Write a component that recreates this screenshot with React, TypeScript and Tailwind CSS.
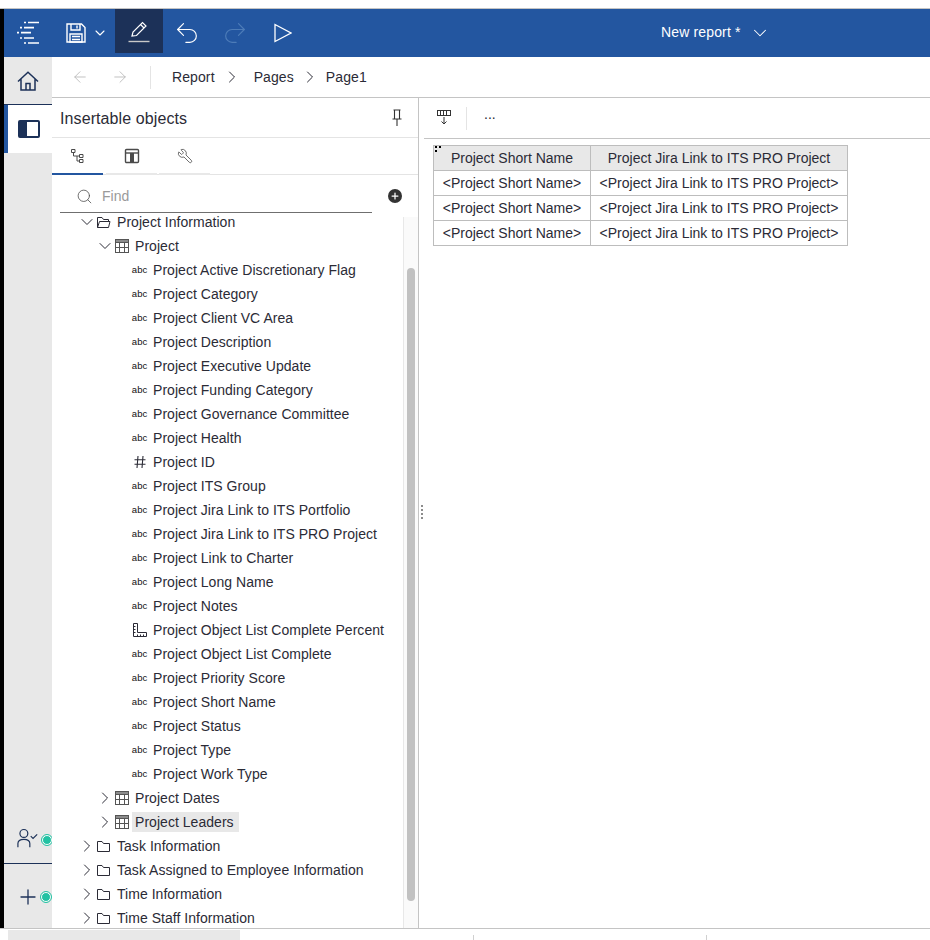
import React from 'react';
import { ChevronDown, ChevronRight, Undo2, Redo2, ArrowLeft, ArrowRight, Search, Plus, Wrench } from 'lucide-react';

type Row = { label: string; kind: 'abc' | 'num' | 'measure' };

const fields: Row[] = [
  { label: 'Project Active Discretionary Flag', kind: 'abc' },
  { label: 'Project Category', kind: 'abc' },
  { label: 'Project Client VC Area', kind: 'abc' },
  { label: 'Project Description', kind: 'abc' },
  { label: 'Project Executive Update', kind: 'abc' },
  { label: 'Project Funding Category', kind: 'abc' },
  { label: 'Project Governance Committee', kind: 'abc' },
  { label: 'Project Health', kind: 'abc' },
  { label: 'Project ID', kind: 'num' },
  { label: 'Project ITS Group', kind: 'abc' },
  { label: 'Project Jira Link to ITS Portfolio', kind: 'abc' },
  { label: 'Project Jira Link to ITS PRO Project', kind: 'abc' },
  { label: 'Project Link to Charter', kind: 'abc' },
  { label: 'Project Long Name', kind: 'abc' },
  { label: 'Project Notes', kind: 'abc' },
  { label: 'Project Object List Complete Percent', kind: 'measure' },
  { label: 'Project Object List Complete', kind: 'abc' },
  { label: 'Project Priority Score', kind: 'abc' },
  { label: 'Project Short Name', kind: 'abc' },
  { label: 'Project Status', kind: 'abc' },
  { label: 'Project Type', kind: 'abc' },
  { label: 'Project Work Type', kind: 'abc' },
];

function TableIcon() {
  return (
    <svg width="14" height="14" viewBox="0 0 14 14" fill="none" stroke="#555" strokeWidth="1">
      <rect x="0.5" y="0.5" width="13" height="13" />
      <rect x="0.5" y="0.5" width="13" height="3" fill="#8c8c8c" />
      <path d="M0.5 8.5H13.5M4.5 3.5V13.5M9.5 3.5V13.5" />
    </svg>
  );
}

function FolderIcon({ open }: { open?: boolean }) {
  if (open) {
    return (
      <svg width="15" height="13" viewBox="0 0 15 13" fill="none" stroke="#2b2b36" strokeWidth="1">
        <path d="M1.5 11.5V1.5H6L7.5 3.5H12.5V5.5" />
        <path d="M1.5 11.5L3.5 5.5H14L12.5 11.5Z" />
      </svg>
    );
  }
  return (
    <svg width="15" height="13" viewBox="0 0 15 13" fill="none" stroke="#2b2b36" strokeWidth="1">
      <path d="M1.5 11.5V1.5H6L7.5 3.5H13.5V11.5Z" />
    </svg>
  );
}

function FieldIcon({ kind }: { kind: Row['kind'] }) {
  if (kind === 'num') {
    return (
      <svg width="14" height="14" viewBox="0 0 14 14" fill="none" stroke="#2b2b36" strokeWidth="1.1">
        <path d="M5 1L4 13M10 1L9 13M1.5 4.8H12.5M1.5 9.2H12.5" />
      </svg>
    );
  }
  if (kind === 'measure') {
    return (
      <svg width="14" height="14" viewBox="0 0 14 14" fill="none" stroke="#2b2b36" strokeWidth="1">
        <path d="M0.5 0.5H4.5V9.5H13.5V13.5H0.5Z" />
        <path d="M0.5 3.5H2.5M0.5 6.5H2.5M0.5 9.5H2.5M4.5 13.5V11.5M7.5 13.5V11.5M10.5 13.5V11.5" />
      </svg>
    );
  }
  return <span className="text-[9.5px] leading-none text-[#111] tracking-normal">abc</span>;
}

function TreeRow({ indent, open, icon, label, active }: { indent: string; open?: boolean; icon: React.ReactNode; label: string; active?: boolean }) {
  return (
    <div className={`flex items-center h-6 shrink-0 ${indent}`}>
      {open ? (
        <ChevronDown size={20} strokeWidth={1.2} className="text-[#2b2b36] shrink-0 -mx-[2.5px]" />
      ) : (
        <ChevronRight size={20} strokeWidth={1.2} className="text-[#2b2b36] shrink-0 -mx-[2.5px]" />
      )}
      <span className="ml-[2px] w-[15px] flex justify-center shrink-0">{icon}</span>
      <span className={`ml-[3px] pl-[3px] pr-[5px] leading-5 whitespace-nowrap ${active ? 'bg-[#e8e8e8]' : ''}`}>{label}</span>
    </div>
  );
}

function Cell({ children, head }: { children: React.ReactNode; head?: boolean }) {
  return (
    <td className={`border border-[#bdbdbd] h-[25px] p-0 text-center whitespace-nowrap ${head ? 'bg-[#e8e8e8]' : ''}`}>{children}</td>
  );
}

export default function App() {
  return (
    <div className="w-[930px] h-[940px] overflow-hidden bg-white flex flex-col text-[14px] text-[#2b2b36] font-['Liberation_Sans',Arial,sans-serif]">
      <div className="h-[9px] shrink-0 bg-white border-b border-[#c4c4c4]" />
      <div className="flex-1 flex min-h-0">
        <div className="w-1 shrink-0 bg-black" />
        <div className="flex-1 flex flex-col min-w-0">
          {/* top bar */}
          <div className="h-12 shrink-0 bg-[#2356a0] flex items-start text-white">
            <div className="w-12 h-12 flex items-center justify-center">
              <svg width="24" height="24" viewBox="0 0 24 24" stroke="#fff" strokeWidth="1.7" fill="none">
                <path d="M8 1.5H10M12 1.5H23M4 6.7H6M8 6.7H18M1 11.7H3M5 11.7H15M4 17H6M8 17H18M8 22H10M12 22H23" />
              </svg>
            </div>
            <div className="w-[63px] h-12 flex items-center pl-[14px]">
              <svg width="20" height="20" viewBox="0 0 20 20" fill="none" stroke="#fff" strokeWidth="1.4">
                <path d="M1 1H15.5L19 4.5V19H1Z" />
                <path d="M5 1V7H14V1M11 2.5V5.5M4 11H16V19H4ZM6 13.5H14M6 16.5H14" />
              </svg>
              <ChevronDown size={16} strokeWidth={1.6} className="ml-[6px]" />
            </div>
            <div className="w-12 h-11 bg-[#1c3158] flex items-center justify-center">
              <svg className="mt-[2px]" width="22" height="22" viewBox="0 0 22 22" fill="none" stroke="#fff" strokeWidth="1.2">
                <path d="M4 15L5 11L14.5 1.5L18 5L8.5 14.5Z" />
                <path d="M12.5 3.5L16 7" />
                <path d="M0.5 20.5H21.5" stroke="#c9c9c9" strokeWidth="1.4" />
              </svg>
            </div>
            <div className="w-12 h-12 flex items-center justify-center">
              <Undo2 size={28} strokeWidth={1} />
            </div>
            <div className="w-12 h-12 flex items-center justify-center text-[#4d7cb8]">
              <Redo2 size={28} strokeWidth={1} />
            </div>
            <div className="w-12 h-12 flex items-center justify-center">
              <svg width="18" height="20" viewBox="0 0 18 20" fill="none" stroke="#fff" strokeWidth="1.3">
                <path d="M1 1.5V18.5L17 10Z" />
              </svg>
            </div>
            <div className="flex-1 flex items-center h-12 pl-[354px]">
              <span className="text-[14px] whitespace-nowrap tracking-[0.15px] -mt-[2px]">New report *</span>
              <ChevronDown size={22} strokeWidth={1.1} className="ml-[8px]" />
            </div>
          </div>

          <div className="flex-1 flex min-h-0">
            {/* rail */}
            <div className="w-12 shrink-0 bg-[#e8e8e8] flex flex-col text-[#1c3158]">
              <div className="h-[47px] flex items-center justify-center">
                <svg width="22" height="20" viewBox="0 0 22 20" fill="none" stroke="#1c3158" strokeWidth="1.5">
                  <path d="M1 10.5L11 1.2L21 10.5M4 8V19H18V8M9 19V12.5H13V19" />
                </svg>
              </div>
              <div className="h-px bg-[#1c3158]" />
              <div className="h-12 bg-white border-l-4 border-[#2356a0] flex items-center justify-center -mr-px pr-[3px]">
                <span className="w-[22px] h-[18px] rounded-[2px] border-2 border-[#1c3158] flex">
                  <span className="w-[7px] bg-[#1c3158]" />
                </span>
              </div>
              <div className="flex-1" />
              <div className="h-[46px] flex items-center pl-[13px] pb-[4px]">
                <svg width="24" height="22" viewBox="0 0 24 22" fill="none" stroke="#1c3158" strokeWidth="1.3">
                  <circle cx="7.5" cy="6" r="4.3" />
                  <path d="M1 21V17Q1 12.5 7.5 12.5Q14 12.5 14 17V21" />
                  <path d="M15 9L17.5 11.5L22 7" />
                </svg>
                <span className="w-[10px] h-[10px] shrink-0 rounded-full bg-[#22c2a3] border border-white outline outline-[#22c2a3] ml-[3px] mt-[3px]" />
              </div>
              <div className="h-px bg-[#1c3158]" />
              <div className="h-[76px] flex items-start pt-[21px] pl-3">
                <Plus size={24} strokeWidth={1.3} />
                <span className="w-[10px] h-[10px] shrink-0 rounded-full bg-[#22c2a3] border border-white outline outline-[#22c2a3] ml-[1px] mt-[7px]" />
              </div>
            </div>

            {/* main */}
            <div className="flex-1 flex flex-col min-w-0 relative bg-white">
              <div className="h-[41px] shrink-0 border-b border-[#c4c4c4] flex items-center">
                <ArrowLeft size={18} strokeWidth={1.1} className="ml-[19px] text-[#b5b5b5]" />
                <ArrowRight size={18} strokeWidth={1.1} className="ml-[22px] text-[#b5b5b5]" />
                <div className="w-px h-[23px] bg-[#e4e4e4] ml-[21px]" />
                <span className="ml-[21px] tracking-[0.1px]">Report</span>
                <ChevronRight size={20} strokeWidth={1.2} className="ml-[7px]" />
                <span className="ml-[12px] tracking-[0.1px]">Pages</span>
                <ChevronRight size={20} strokeWidth={1.2} className="ml-[6px]" />
                <span className="ml-[6px] tracking-[0.1px]">Page1</span>
              </div>

              <div className="flex-1 flex min-h-0">
                {/* insertable objects */}
                <div className="w-[367px] shrink-0 flex flex-col border-r border-[#c4c4c4]">
                  <div className="h-10 shrink-0 border-b border-[#e4e4e4] flex items-center justify-between pl-2 pr-[15px]">
                    <span className="text-[16px] tracking-[0.1px] pt-[2px]">Insertable objects</span>
                    <svg width="12" height="17" viewBox="0 0 12 17" fill="none" stroke="#333" strokeWidth="1.1">
                      <path d="M2.5 1H9.5M3.5 1V10M8.5 1V10M1.5 10H10.5M6 10V17" />
                    </svg>
                  </div>
                  <div className="h-[37px] shrink-0 border-b border-[#e4e4e4] flex items-stretch">
                    <div className="w-[51px] flex items-center justify-center border-b-2 border-[#2356a0] -mb-px">
                      <svg width="16" height="16" viewBox="0 0 16 16" fill="none" stroke="#4a4a4a" strokeWidth="1">
                        <path d="M1.5 1.5H5V4.5H1.5ZM9.5 6.5H13V9.5H9.5ZM9.5 11.5H13V14.5H9.5ZM3.5 4.5V8H9.5M7 8V13H9.5" />
                      </svg>
                    </div>
                    <div className="w-[51px] ml-[3px] flex items-center justify-center border-b-2 border-[#e8e8e8] -mb-px">
                      <svg width="16" height="16" viewBox="0 0 16 16" fill="none" stroke="#4a4a4a" strokeWidth="1.4">
                        <rect x="1.5" y="1.5" width="13" height="13" rx="1" />
                        <path d="M1.5 5H14.5" />
                        <rect x="6" y="5" width="4" height="9" fill="#4a4a4a" stroke="none" />
                      </svg>
                    </div>
                    <div className="w-[51px] ml-[2px] flex items-center justify-center border-b-2 border-[#e8e8e8] -mb-px">
                      <Wrench size={16} strokeWidth={1.2} className="text-[#4a4a4a] -scale-x-100" />
                    </div>
                  </div>
                  <div className="h-[38px] shrink-0 flex items-center justify-between pl-2 pr-4">
                    <div className="w-[312px] h-[38px] border-b border-[#6f6f6f] flex items-center pl-[16px] pt-[5px]">
                      <Search size={17} strokeWidth={1.1} className="text-[#4a4a4a]" />
                      <span className="ml-[9px] text-[#9a9a9a]">Find</span>
                    </div>
                    <span className="w-[14px] h-[14px] mt-[4px] rounded-full bg-[#333] flex items-center justify-center text-white">
                      <Plus size={10} strokeWidth={3} />
                    </span>
                  </div>
                  <div className="flex-1 flex min-h-0 tracking-[0.04px]">
                    <div className="flex-1 min-w-0 overflow-hidden flex flex-col -mt-[3px]">
                      <TreeRow indent="pl-[27px]" open icon={<FolderIcon open />} label="Project Information" />
                      <TreeRow indent="pl-[45px]" open icon={<TableIcon />} label="Project" />
                      {fields.map(f => (
                        <div key={f.label} className="flex items-center h-6 shrink-0 pl-[80px]">
                          <span className="w-[15px] flex justify-center shrink-0"><FieldIcon kind={f.kind} /></span>
                          <span className="ml-[6px] whitespace-nowrap">{f.label}</span>
                        </div>
                      ))}
                      <TreeRow indent="pl-[45px]" icon={<TableIcon />} label="Project Dates" />
                      <TreeRow indent="pl-[45px]" icon={<TableIcon />} label="Project Leaders" active />
                      <TreeRow indent="pl-[27px]" icon={<FolderIcon />} label="Task Information" />
                      <TreeRow indent="pl-[27px]" icon={<FolderIcon />} label="Task Assigned to Employee Information" />
                      <TreeRow indent="pl-[27px]" icon={<FolderIcon />} label="Time Information" />
                      <TreeRow indent="pl-[27px]" icon={<FolderIcon />} label="Time Staff Information" />
                    </div>
                    <div className="w-[15px] shrink-0 mt-[4px] border-l border-[#e8e8e8] bg-[#fafafa] pt-[51px] pb-[27px] pl-[3px]">
                      <div className="w-2 h-full rounded-[4px] bg-[#c1c1c1]" />
                    </div>
                  </div>
                </div>

                {/* canvas */}
                <div className="flex-1 min-w-0 flex">
                  <div className="w-[5px] shrink-0 flex flex-col items-center justify-center gap-[2px] pb-[2px]">
                    <span className="w-[2px] h-[2px] bg-[#8c8c8c]" />
                    <span className="w-[2px] h-[2px] bg-[#8c8c8c]" />
                    <span className="w-[2px] h-[2px] bg-[#8c8c8c]" />
                    <span className="w-[2px] h-[2px] bg-[#8c8c8c]" />
                  </div>
                  <div className="flex-1 min-w-0 flex flex-col">
                    <div className="h-[41px] shrink-0 border-b border-[#c4c4c4] flex items-center">
                      <svg className="ml-[12px]" width="16" height="18" viewBox="0 0 16 18" fill="none" stroke="#333" strokeWidth="1">
                        <rect x="1.5" y="1.5" width="13" height="5" />
                        <path d="M4.5 1.5V6.5M7.5 1.5V6.5M10.5 1.5V6.5M8 8V15M5.5 12.5L8 15L10.5 12.5" />
                      </svg>
                      <div className="w-px h-[23px] bg-[#e4e4e4] ml-[14px]" />
                      <span className="ml-[17px] text-[14px] leading-none -mt-[8px]">...</span>
                    </div>
                    <div className="relative ml-[9px] mt-[6px] w-[415px]">
                      <table className="border-collapse table-fixed w-[414px] text-[14px] leading-none">
                        <colgroup>
                          <col className="w-[157px]" />
                          <col className="w-[257px]" />
                        </colgroup>
                        <tbody>
                          <tr>
                            <Cell head>Project Short Name</Cell>
                            <Cell head>Project Jira Link to ITS PRO Project</Cell>
                          </tr>
                          {[0, 1, 2].map(i => (
                            <tr key={i}>
                              <Cell>&lt;Project Short Name&gt;</Cell>
                              <Cell>&lt;Project Jira Link to ITS PRO Project&gt;</Cell>
                            </tr>
                          ))}
                        </tbody>
                      </table>
                      <span className="absolute left-[2px] top-[1px] w-[2px] h-[2px] bg-black" />
                      <span className="absolute left-[6px] top-[1px] w-[2px] h-[2px] bg-black" />
                      <span className="absolute left-[2px] top-[5px] w-[2px] h-[2px] bg-black" />
                    </div>
                  </div>
                </div>
              </div>

              <div className="h-3 shrink-0" />
            </div>
          </div>
        </div>
      </div>
      <div className="h-[12px] shrink-0 -mt-[12px] relative border-t border-[#c4c4c4] bg-white flex">
        <div className="w-[232px] ml-2 mt-[1px] bg-[#e8e8e8]" />
        <div className="w-px h-[5px] mt-[6px] ml-[233px] bg-[#d0d0d0]" />
        <div className="w-px h-[5px] mt-[6px] ml-[232px] bg-[#d0d0d0]" />
      </div>
    </div>
  );
}
